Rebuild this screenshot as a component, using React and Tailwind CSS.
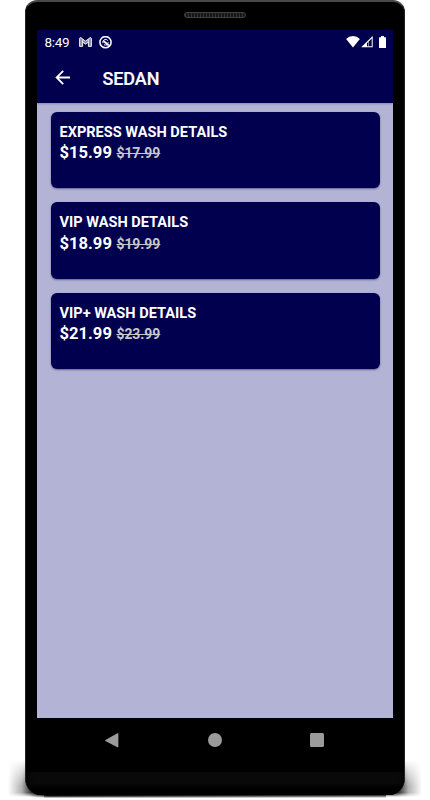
const washes = [
  { id: 1, title: 'EXPRESS WASH DETAILS', price: '$15.99', oldPrice: '$17.99' },
  { id: 2, title: 'VIP WASH DETAILS', price: '$18.99', oldPrice: '$19.99' },
  { id: 3, title: 'VIP+ WASH DETAILS', price: '$21.99', oldPrice: '$23.99' },
];

const StatusBar = () => (
  <div className="flex h-6 items-center pl-[7.5px] pr-[7px] text-white">
    <span className="w-[34.5px] text-[13.5px] leading-6 tracking-[-0.3px]">8:49</span>
    <svg className="h-[10px] w-[13px]" viewBox="0 0 13 10">
      <path
        d="M.6 1.8Q.6.6 1.8.6L6.5 4.2 11.2.6Q12.4.6 12.4 1.8V9.4H9.4V5L6.5 7.2 3.6 5V9.4H.6Z"
        fill="#8c8ca8"
        stroke="#f0f0f4"
        strokeWidth="1"
      />
      <path d="M3.6 2.2V5M9.4 2.2V5" stroke="#f0f0f4" strokeWidth=".8" />
    </svg>
    <svg className="ml-[6.5px] h-[13px] w-[13px]" viewBox="0 0 13 13" fill="none" stroke="#f4f4f8">
      <circle cx="6.5" cy="6.2" r="5.6" strokeWidth="1.6" />
      <path d="M3.9 7.2A2.8 2.8 0 0 1 8.8 4.6M5 8.7A2.9 2.9 0 0 0 9.3 6.2" strokeWidth="1" />
      <path d="M4.6 5L9.8 9.6" strokeWidth="2" />
    </svg>
    <div className="grow" />
    <svg className="h-[12px] w-[14px]" viewBox="0 0 14 12" fill="#fff">
      <path d="M7 11.4L.1 3Q3 .1 7 .1T13.9 3Z" />
    </svg>
    <svg className="ml-px h-[12px] w-[12px]" viewBox="0 0 12 12">
      <path d="M.2 11.2L11.7-.1V11.2ZM6 10.2H10.7V2.6L6 7.2Z" fill="#fff" fillRule="evenodd" />
      <path d="M7.5 5.8V10.6" stroke="#fff" strokeWidth=".5" />
    </svg>
    <svg className="ml-[6px] h-[13px] w-[7px]" viewBox="0 0 7 13" fill="#fff">
      <path d="M2 0H5V1.2H6.4Q7 1.2 7 1.8V11.5Q7 12.1 6.4 12.1H.6Q0 12.1 0 11.5V1.8Q0 1.2.6 1.2H2Z" />
    </svg>
  </div>
);

const Header = () => (
  <div className="flex h-[49px] items-center pl-[18px] text-white">
    <svg className="mb-px h-4 w-4" viewBox="0 0 16 16" fill="none" stroke="#fff" strokeWidth="1.8">
      <path d="M15 7.5H2M8.2 .9L1.6 7.5L8.2 14.1" />
    </svg>
    <h1 className="ml-[31.5px] text-[18px] font-medium leading-6 tracking-[-0.1px] [-webkit-text-stroke:0.2px_white]">
      SEDAN
    </h1>
  </div>
);

const WashCard = ({ wash }) => (
  <div className="h-[76.5px] rounded-[6px] bg-[#00004f] px-[8.5px] pt-[11px] shadow-[0_1px_2px_rgba(0,0,40,0.45)]">
    <h2 className="text-[14.55px] font-bold leading-5 text-white">{wash.title}</h2>
    <div className="-mt-[0.5px] flex items-baseline leading-[22px]">
      <span className="text-[16.6px] font-bold text-white">{wash.price}</span>
      <span className="ml-[4.5px] text-[13.9px] font-bold text-[#c8c8c8] line-through">{wash.oldPrice}</span>
    </div>
  </div>
);

const NavBar = () => (
  <div className="flex h-[54px] items-center bg-black pb-[10px] pl-[68px]">
    <svg className="h-[15px] w-[14px]" viewBox="0 0 14 15" fill="#9b9b9b">
      <path d="M.4 6.9L12.4.2Q13.4-.1 13.4.9V13.6Q13.4 14.7 12.4 14.3L.4 7.9Q-.1 7.4.4 6.9Z" />
    </svg>
    <div className="ml-[89px] h-[14px] w-[14px] rounded-full bg-[#9b9b9b]" />
    <div className="ml-[88px] h-[14px] w-[14px] rounded-[1.5px] bg-[#9b9b9b]" />
  </div>
);

export default function App() {
  return (
    <div className="relative h-[800px] w-[430px] overflow-hidden bg-white font-['Roboto',sans-serif]">
      {/* soft shadow around the bottom corners and under the phone */}
      <div className="absolute left-[8px] top-[760px] h-[37px] w-[36px] bg-linear-to-l from-black from-25% via-black/30 via-62% to-transparent mask-[linear-gradient(to_bottom,transparent,black_70%,black_88%,transparent)]" />
      <div className="absolute left-[386px] top-[760px] h-[37px] w-[36px] bg-linear-to-r from-black from-25% via-black/30 via-62% to-transparent mask-[linear-gradient(to_bottom,transparent,black_70%,black_88%,transparent)]" />
      <div className="absolute left-[30px] top-[794px] h-[4px] w-[370px] bg-linear-to-r from-transparent via-black via-5% to-transparent to-100% mask-[linear-gradient(to_bottom,black_25%,transparent)]" />
      <div className="absolute left-[44px] top-[794px] h-[4px] w-[342px] bg-linear-to-b from-black/90 from-25% to-transparent" />

      <div className="relative ml-[25px] flex h-[795px] w-[380px] flex-col overflow-hidden rounded-t-[12px] rounded-b-[16px] border-x border-t-2 border-x-[#222] border-t-[#484848] bg-black">
        <div className="flex h-[28px] shrink-0 justify-center pt-[10px]">
          <div className="h-[6px] w-[62px] rounded-full border border-[#424242] bg-[repeating-linear-gradient(90deg,#333_0px,#333_1px,#161616_1px,#161616_3px)]" />
        </div>

        <div className="mx-[11px] flex h-[742px] w-[356px] shrink-0 flex-col">
          <div className="relative h-[73px] shrink-0 bg-[#00004f] shadow-[0_1px_2px_rgba(0,0,40,0.25)]">
            <StatusBar />
            <Header />
          </div>
          <div className="flex grow flex-col gap-[14px] bg-[#b3b3d5] pl-[14px] pr-[13px] pt-[8.5px]">
            {washes.map(wash => (
              <WashCard key={wash.id} wash={wash} />
            ))}
          </div>
          <NavBar />
        </div>

        <div className="grow bg-linear-to-b from-[#090909] from-50% to-black shadow-[inset_0_-4px_6px_#000]" />
      </div>
    </div>
  );
}
